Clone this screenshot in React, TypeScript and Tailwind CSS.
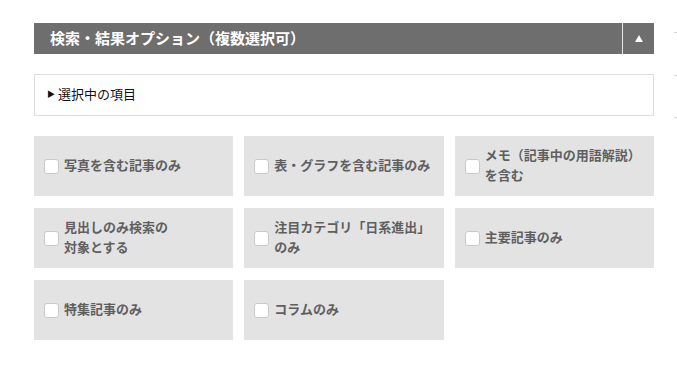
import React from 'react'

const options = [
  ['写真を含む記事のみ'],
  ['表・グラフを含む記事のみ'],
  ['メモ（記事中の用語解説）', 'を含む'],
  ['見出しのみ検索の', '対象とする'],
  ['注目カテゴリ「日系進出」', 'のみ'],
  ['主要記事のみ'],
  ['特集記事のみ'],
  ['コラムのみ'],
]

function OptionCard({ lines }: { lines: string[] }) {
  return (
    <label className="flex h-[60px] items-center bg-[#e3e3e3] pl-[10px] pr-2 cursor-pointer">
      <span className="h-[15px] w-[15px] shrink-0 rounded-[3px] border border-[#c9c9c9] bg-white" />
      <span className="ml-[5px] -mt-[2px] text-[13px] font-bold leading-[20px] text-[#5f5f5f]">
        {lines.map((l, i) => (
          <span key={i} className="block">
            {l}
          </span>
        ))}
      </span>
    </label>
  )
}

export default function App() {
  return (
    <div
      className="relative h-[365px] w-[677px] bg-white"
      style={{ fontFamily: '"Noto Sans CJK JP", "Noto Sans", sans-serif' }}
    >
      <div className="absolute right-0 top-[32px] h-px w-[3px] bg-[#d5d5d5]" />
      <div className="absolute right-0 top-[75px] h-px w-[3px] bg-[#d5d5d5]" />
      <div className="absolute right-0 top-[117px] h-px w-[3px] bg-[#d5d5d5]" />

      <div className="ml-[34px] w-[620px] pt-[23px]">
        <div className="flex h-[31px] bg-[#6e6e6e]">
          <div className="flex flex-1 items-center pl-[16px] text-[15px] font-bold text-white">
            検索・結果オプション（複数選択可）
          </div>
          <div className="flex w-[32px] items-center justify-center border-l border-[#e5e5e5]">
            <svg width="8" height="7" viewBox="0 0 8 7">
              <polygon points="4,0 8,7 0,7" fill="#fff" />
            </svg>
          </div>
        </div>

        <div className="mt-[20px] flex h-[42px] items-center border border-[#dedede] pb-[2px] pl-[12px] text-[13px] text-[#111]">
          <span className="mr-[3px] text-[8px]">▶</span>
          選択中の項目
        </div>

        <div className="mt-[20px] grid grid-cols-3 gap-x-[11px] gap-y-[12px]">
          {options.map((lines, i) => (
            <OptionCard key={i} lines={lines} />
          ))}
        </div>
      </div>
    </div>
  )
}
